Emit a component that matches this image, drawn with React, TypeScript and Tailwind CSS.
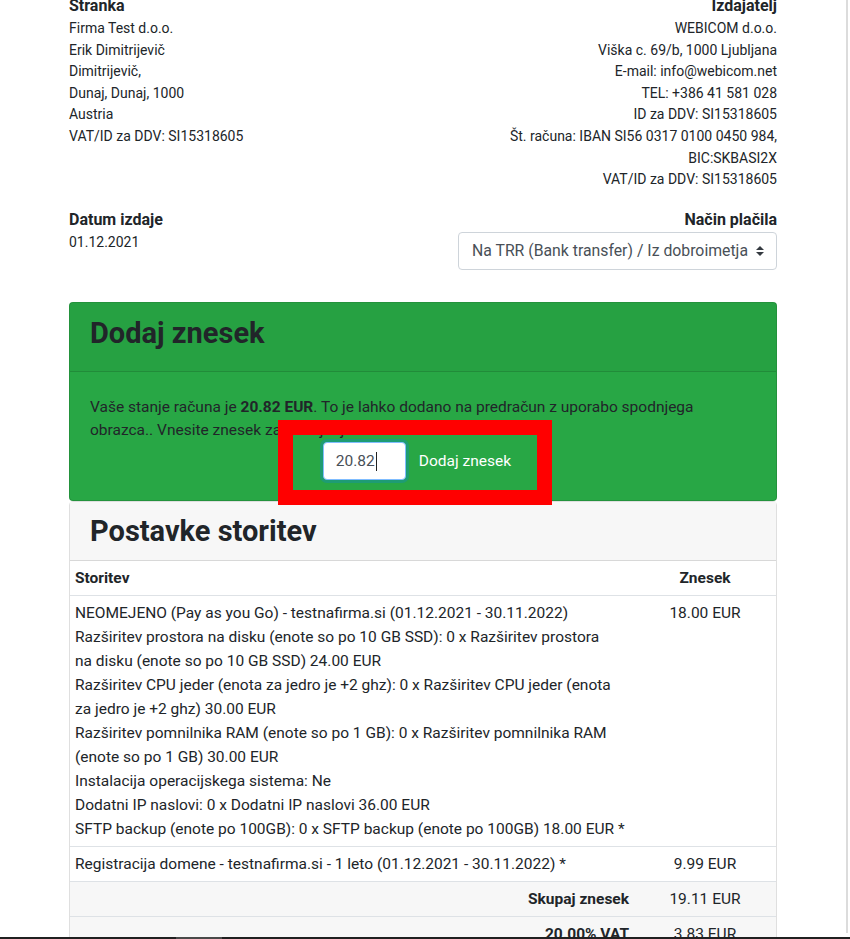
import React from "react";

const stranka = [
  "Firma Test d.o.o.",
  "Erik Dimitrijevič",
  "Dimitrijevič,",
  "Dunaj, Dunaj, 1000",
  "Austria",
  "VAT/ID za DDV: SI15318605",
];

const izdajatelj = [
  "WEBICOM d.o.o.",
  "Viška c. 69/b, 1000 Ljubljana",
  "E-mail: info@webicom.net",
  "TEL: +386 41 581 028",
  "ID za DDV: SI15318605",
  "Št. računa: IBAN SI56 0317 0100 0450 984,",
  "BIC:SKBASI2X",
  "VAT/ID za DDV: SI15318605",
];

const storitevLines = [
  "NEOMEJENO (Pay as you Go) - testnafirma.si (01.12.2021 - 30.11.2022)",
  "Razširitev prostora na disku (enote so po 10 GB SSD): 0 x Razširitev prostora",
  "na disku (enote so po 10 GB SSD) 24.00 EUR",
  "Razširitev CPU jeder (enota za jedro je +2 ghz): 0 x Razširitev CPU jeder (enota",
  "za jedro je +2 ghz) 30.00 EUR",
  "Razširitev pomnilnika RAM (enote so po 1 GB): 0 x Razširitev pomnilnika RAM",
  "(enote so po 1 GB) 30.00 EUR",
  "Instalacija operacijskega sistema: Ne",
  "Dodatni IP naslovi: 0 x Dodatni IP naslovi 36.00 EUR",
  "SFTP backup (enote po 100GB): 0 x SFTP backup (enote po 100GB) 18.00 EUR *",
];

const totals = [
  ["Skupaj znesek", "19.11 EUR"],
  ["20.00% VAT", "3.83 EUR"],
  ["Skupaj za plačilo", "22.94 EUR"],
];

const SelectArrows = () => (
  <svg width="8" height="10" viewBox="0 0 4 5" className="shrink-0">
    <path d="M2 0L0 2h4zm0 5L0 3h4z" fill="#343a40" />
  </svg>
);

export default function App() {
  return (
    <div className="relative h-[939px] overflow-hidden bg-white font-['Roboto',sans-serif] text-[#212529]">
      <div className="h-full w-[848px] border-r-2 border-[#dcdcdc]">
        <div className="mx-auto mt-[-6px] w-[708px]">
          {/* stranka / izdajatelj */}
          <div className="flex justify-between">
            <div>
              <h6 className="text-[16px] font-bold leading-6">Stranka</h6>
              {stranka.map((l) => (
                <div key={l} className="text-[14px] leading-[21.6px]">
                  {l}
                </div>
              ))}
            </div>
            <div className="text-right">
              <h6 className="text-[16px] font-bold leading-6">Izdajatelj</h6>
              {izdajatelj.map((l) => (
                <div key={l} className="text-[14px] leading-[21.6px]">
                  {l}
                </div>
              ))}
            </div>
          </div>

          <div className="mt-[17px] flex justify-between">
            <div>
              <h6 className="text-[16px] font-bold leading-6">Datum izdaje</h6>
              <div className="text-[14px] leading-[21.6px]">01.12.2021</div>
            </div>
            <div className="flex flex-col items-end">
              <h6 className="text-[16px] font-bold leading-6">Način plačila</h6>
              <div className="flex h-[38px] items-center gap-[8px] rounded border border-[#ced4da] bg-white pl-[13px] pr-3 text-[15.8px] text-[#495057]">
                <span>Na TRR (Bank transfer) / Iz dobroimetja</span>
                <SelectArrows />
              </div>
            </div>
          </div>

          {/* dodaj znesek */}
          <div className="relative mt-[32px] rounded border border-[rgba(0,0,0,0.125)] bg-[#28a745]">
            <div className="border-b border-[rgba(0,0,0,0.125)] bg-[rgba(0,0,0,0.03)] px-5 py-3">
              <h2 className="mb-2 text-[29px] font-bold leading-9">Dodaj znesek</h2>
            </div>
            <div className="px-5 pb-5 pt-[24.5px]">
              <p className="text-[15.5px] leading-[23px]">
                Vaše stanje računa je <b>20.82 EUR</b>. To je lahko dodano na predračun z uporabo spodnjega
                obrazca.. Vnesite znesek za dodajanje.
              </p>
              <div className="flex justify-center">
                <div className="flex h-[38px] w-[83px] items-center rounded border border-[#80bdff] bg-white px-3 text-[15.5px] text-[#495057] shadow-[0_0_0_3px_rgba(0,123,255,0.25)]">
                  20.82
                  <span className="ml-px h-[19px] w-px bg-[#222]" />
                </div>
                <button className="ml-px h-[38px] px-3 text-[15.5px] text-white">Dodaj znesek</button>
              </div>
            </div>
            <div className="absolute left-[208px] top-[117px] z-10 h-[85px] w-[274px] border-[15px] border-[#ff0000]" />
          </div>

          {/* postavke */}
          <div className="rounded-t border border-[rgba(0,0,0,0.125)]">
            <div className="border-b border-[rgba(0,0,0,0.125)] bg-[#f7f7f7] px-5 py-3">
              <h2 className="text-[29px] font-bold leading-[34px]">Postavke storitev</h2>
            </div>
            <table className="w-full border-collapse text-[15.5px] leading-6">
              <thead>
                <tr>
                  <th className="px-[5px] py-[5px] text-left font-bold">Storitev</th>
                  <th className="w-[142px] px-[5px] py-[5px] text-center font-bold">Znesek</th>
                </tr>
              </thead>
              <tbody>
                <tr className="border-t border-[#dee2e6]">
                  <td className="px-[5px] py-[5px] align-top">
                    {storitevLines.map((l) => (
                      <div key={l} className="whitespace-nowrap">
                        {l}
                      </div>
                    ))}
                  </td>
                  <td className="px-[5px] py-[5px] text-center align-top">18.00 EUR</td>
                </tr>
                <tr className="border-t border-[#dee2e6]">
                  <td className="px-[5px] py-[5px]">
                    Registracija domene - testnafirma.si - 1 leto (01.12.2021 - 30.11.2022) *
                  </td>
                  <td className="px-[5px] py-[5px] text-center">9.99 EUR</td>
                </tr>
                {totals.map(([k, v]) => (
                  <tr key={k} className="border-t border-[#dee2e6] bg-[#f7f7f7]">
                    <td className="px-[5px] py-[5px] text-right font-bold">{k}</td>
                    <td className="px-[5px] py-[5px] text-center">{v}</td>
                  </tr>
                ))}
              </tbody>
            </table>
          </div>
        </div>
      </div>

      {/* window scrollbar strip */}
      <div className="absolute bottom-0 left-0 h-[2px] w-full bg-[#202020]">
        <div className="ml-[176px] h-full w-[46px] bg-[#4a4a4a]" />
      </div>
    </div>
  );
}
